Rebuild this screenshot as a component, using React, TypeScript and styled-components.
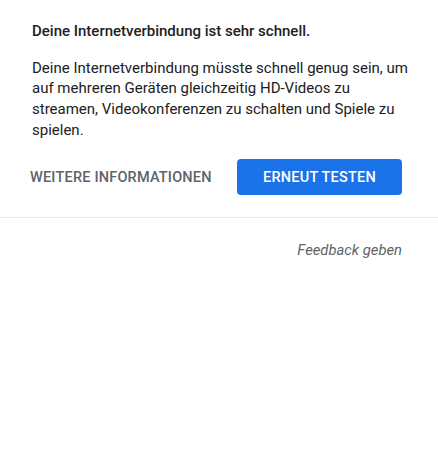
import styled, { createGlobalStyle } from 'styled-components';

const GlobalStyle = createGlobalStyle`
  html, body {
    margin: 0;
    padding: 0;
    background: #ffffff;
  }
  body {
    font-family: Roboto, 'Liberation Sans', Arial, sans-serif;
    -webkit-font-smoothing: antialiased;
  }
`;

const Panel = styled.div`
  width: 438px;
  overflow: hidden;
  background: #ffffff;
`;

const Result = styled.section`
  padding: 0 30px 22px 32px;
  border-bottom: 1px solid #e8eaed;
`;

// bottom of the previous line, scrolled mostly out of view
const CutLine = styled.div`
  margin-top: -13px;
  height: 17px;
  font-size: 14px;
  line-height: 17px;
  color: #d0d3d5;
`;

const Title = styled.h2`
  margin: 17px 0 0 0;
  font-size: 15px;
  line-height: 20px;
  font-weight: 500;
  color: #202124;
`;

const Body = styled.p`
  margin: 16.6px 0 0 0;
  font-size: 15px;
  line-height: 20.7px;
  color: #202124;
`;

const Actions = styled.div`
  display: flex;
  align-items: center;
  justify-content: space-between;
  margin-top: 19px;
  padding-right: 6px;
`;

const Button = styled.button<{ $primary?: boolean }>`
  font-family: Roboto, 'Liberation Sans', Arial, sans-serif;
  font-size: 14.5px;
  font-weight: 500;
  letter-spacing: 0.2px;
  text-transform: uppercase;
  height: 36px;
  padding: 0;
  border: none;
  border-radius: 4px;
  cursor: pointer;
  background: ${(p) => (p.$primary ? '#1a73e8' : 'transparent')};
  color: ${(p) => (p.$primary ? '#ffffff' : '#5f6368')};
  width: ${(p) => (p.$primary ? '165px' : 'auto')};
  margin-left: ${(p) => (p.$primary ? '0' : '-2px')};
`;

const Footer = styled.div`
  display: flex;
  justify-content: flex-end;
  padding: 22px 36px 0 32px;
`;

const FeedbackLink = styled.a`
  font-size: 14.8px;
  line-height: 20px;
  font-style: italic;
  color: #5f6368;
  text-decoration: none;
  cursor: pointer;
`;

export default function App() {
  return (
    <Panel>
      <GlobalStyle />
      <Result>
        <CutLine>Weitere Details ansehen</CutLine>
        <Title>Deine Internetverbindung ist sehr schnell.</Title>
        <Body>
          Deine Internetverbindung müsste schnell genug sein, um auf mehreren Geräten
          gleichzeitig HD-Videos zu streamen, Videokonferenzen zu schalten und Spiele zu
          spielen.
        </Body>
        <Actions>
          <Button>Weitere Informationen</Button>
          <Button $primary>Erneut testen</Button>
        </Actions>
      </Result>
      <Footer>
        <FeedbackLink>Feedback geben</FeedbackLink>
      </Footer>
    </Panel>
  );
}
